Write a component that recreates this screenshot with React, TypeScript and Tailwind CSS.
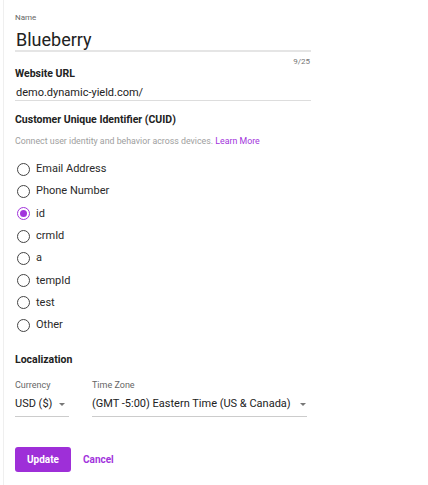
const options = [
  "Email Address",
  "Phone Number",
  "id",
  "crmId",
  "a",
  "tempId",
  "test",
  "Other",
];

const Caret = () => (
  <svg width="6" height="3" viewBox="0 0 6 3" className="shrink-0">
    <path d="M0 0h6L3 3z" fill="#777777" />
  </svg>
);

const Radio = ({ label, checked }: { label: string; checked?: boolean }) => (
  <div className="flex items-center h-[22.3px]">
    <span
      className={
        checked
          ? "ml-[2px] w-[13px] h-[13px] rounded-full border-[1.5px] border-[#a234dc] flex items-center justify-center"
          : "ml-[2px] w-[13px] h-[13px] rounded-full border-[1.5px] border-[#444444]"
      }
    >
      {checked && <span className="w-[7px] h-[7px] rounded-full bg-[#a234dc]" />}
    </span>
    <span className="ml-[6px] text-[11px] leading-[14px] text-[#2a2a2a]">
      {label}
    </span>
  </div>
);

export default function App() {
  return (
    <div className="w-[428px] h-[485px] bg-white flex font-['Roboto',sans-serif]">
      <div className="ml-[3px] w-px bg-[#efefef]" />
      <div className="pl-[11px] w-[307px] flex flex-col">
        <div className="mt-[13px] text-[8px] leading-[10px] text-[#666666]">Name</div>
        <div className="mt-[6px] h-[23px] border-b-2 border-[#e5e5e5] text-[18px] leading-[21px] font-normal text-[#222222] pl-px">
          Blueberry
        </div>
        <div className="mt-[5px] h-[10px] pr-px text-right text-[8px] leading-[10px] text-[#757575]">
          9/25
        </div>
        <div className="h-[13px] text-[10.5px] leading-[13px] font-bold text-[#222222]">
          Website URL
        </div>
        <div className="mt-[6px] h-[15px] border-b border-[#dddddd] text-[11px] leading-[14px] text-[#222222] pl-px">
          demo.dynamic-yield.com/
        </div>
        <div className="mt-[12px] text-[10.5px] leading-[14px] font-bold text-[#222222]">
          Customer Unique Identifier (CUID)
        </div>
        <div className="mt-[9px] text-[8.8px] leading-[10px] text-[#9e9e9e]">
          Connect user identity and behavior across devices.{" "}
          <span className="text-[#a234dc]">Learn More</span>
        </div>
        <div className="mt-[12px] flex flex-col">
          {options.map((o) => (
            <Radio key={o} label={o} checked={o === "id"} />
          ))}
        </div>
        <div className="mt-[17px] text-[10.5px] leading-[14px] font-bold text-[#222222]">
          Localization
        </div>
        <div className="mt-[13px] flex gap-[23px]">
          <div className="w-[54px] flex flex-col">
            <div className="text-[9px] leading-[10px] text-[#666666]">Currency</div>
            <div className="mt-[7px] h-[20px] border-b border-[#cccccc] flex items-start">
              <span className="text-[11px] leading-[14px] text-[#222222]">USD ($)</span>
              <span className="ml-[7px] mt-[6px]">
                <Caret />
              </span>
            </div>
          </div>
          <div className="w-[215px] flex flex-col">
            <div className="text-[9px] leading-[10px] text-[#666666]">Time Zone</div>
            <div className="mt-[7px] h-[20px] border-b border-[#cccccc] flex items-start">
              <span className="text-[11px] leading-[14px] text-[#222222]">
                (GMT -5:00) Eastern Time (US &amp; Canada)
              </span>
              <span className="ml-[9px] mt-[6px]">
                <Caret />
              </span>
            </div>
          </div>
        </div>
        <div className="mt-[30px] flex items-center">
          <button className="w-[56px] h-[25px] rounded-[3px] bg-[#9e2fd8] text-white text-[10px] font-bold">
            Update
          </button>
          <span className="ml-[12px] text-[10px] font-bold text-[#a234dc]">Cancel</span>
        </div>
      </div>
    </div>
  );
}
